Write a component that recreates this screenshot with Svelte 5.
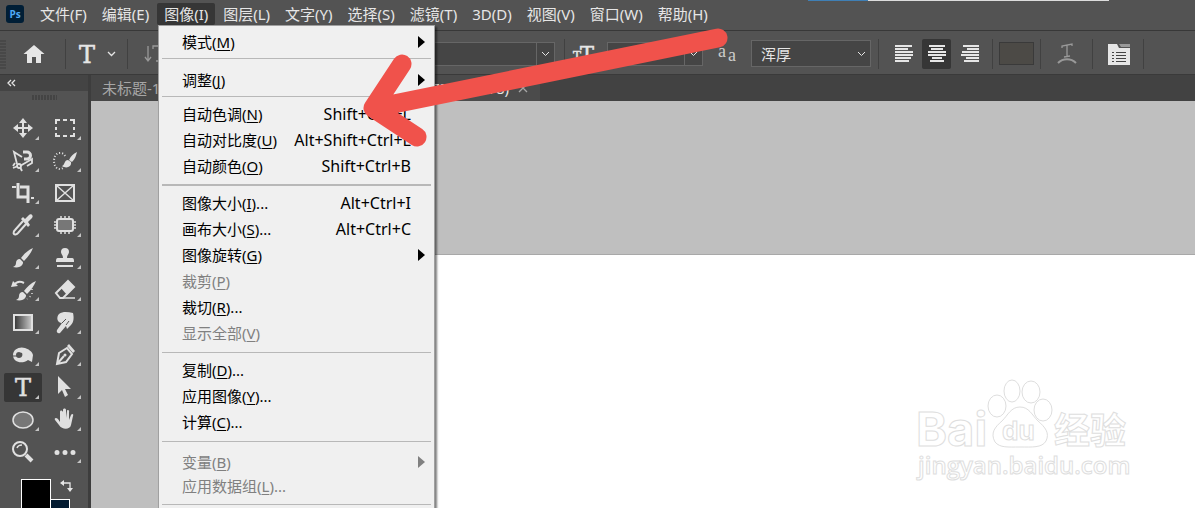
<script>
  const menus = [
    '文件(F)', '编辑(E)', '图像(I)', '图层(L)', '文字(Y)', '选择(S)',
    '滤镜(T)', '3D(D)', '视图(V)', '窗口(W)', '帮助(H)'
  ];
  let openMenu = $state('图像(I)');

  const groups = [
    { items: [{ label: '模式', key: 'M', sub: true }] },
    { kind: 'low', items: [{ label: '调整', key: 'J', sub: true }] },
    {
      kind: 'heavy',
      items: [
        { label: '自动色调', key: 'N', shortcut: 'Shift+Ctrl+L' },
        { label: '自动对比度', key: 'U', shortcut: 'Alt+Shift+Ctrl+L' },
        { label: '自动颜色', key: 'O', shortcut: 'Shift+Ctrl+B' }
      ]
    },
    {
      items: [
        { label: '图像大小', key: 'I', more: true, shortcut: 'Alt+Ctrl+I' },
        { label: '画布大小', key: 'S', more: true, shortcut: 'Alt+Ctrl+C' },
        { label: '图像旋转', key: 'G', sub: true },
        { label: '裁剪', key: 'P', disabled: true },
        { label: '裁切', key: 'R', more: true },
        { label: '显示全部', key: 'V', disabled: true }
      ]
    },
    {
      items: [
        { label: '复制', key: 'D', more: true },
        { label: '应用图像', key: 'Y', more: true },
        { label: '计算', key: 'C', more: true }
      ]
    },
    {
      kind: 'tight',
      items: [
        { label: '变量', key: 'B', disabled: true, sub: true },
        { label: '应用数据组', key: 'L', more: true, disabled: true }
      ]
    }
  ];

  const brush = '<path fill="currentColor" d="M22 2c-5 2-9 6-12 10l3 3c4-4 7-8 9-13zM9 13c-3 0-4 2-4 4s-1 3-3 4c4 1 8 0 9-2 1-1 1-2 1-3z"/>';

  // artwork is drawn on a 24px grid, light parts take the button colour
  const tools = [
    { name: '移动工具', art: '<path d="M12 4v16M4 12h16" stroke-width="2"/><path fill="currentColor" d="M12 2l4 5H8zM12 22l4-5H8zM2 12l5-4v8zM22 12l-5-4v8z"/>' },
    { name: '矩形选框工具', art: '<path stroke-width="2" d="M3 8V4h4M10 4h4M17 4h4v4M21 11v3M21 17v3h-4M14 20h-4M7 20H3v-3M3 14v-3"/>' },
    { name: '套索工具', art: '<path stroke-width="1.8" d="M11 8L3 3l3 12M9 17l12-7v4l-5 3M2 19l5-2M9 18l2 4M4 14l-2 3"/><circle cx="8" cy="17" r="2" stroke-width="1.8"/><path stroke-width="3" d="M12 3h4a3 3 0 0 1 0 7h-3"/>' },
    { name: '快速选择工具', art: '<path stroke-width="2" stroke-dasharray="1 2" d="M12 7a5 5 0 0 0-5-3C3 4 1 8 1 12s2 8 6 8c2 0 3-1 4-2"/><path fill="currentColor" d="M24 3c-4 2-6 4-8 8l3 2c3-3 4-6 5-10zM15 11c-4 0-3 5-6 6 4 3 10 1 9-4z"/>' },
    { name: '裁剪工具', art: '<path stroke-width="3" d="M7 2v14h10M9 6h8v16"/><path stroke-width="2" d="M1 6h4M20 17h3"/>' },
    { name: '图框工具', plain: true, art: '<path stroke-width="2" d="M3 4h18v16H3z"/><path stroke-width="1.5" d="M3 4l18 16M21 4L3 20"/><path fill="currentColor" d="M2 3h3v3H2zM19 3h3v3h-3zM2 18h3v3H2zM19 18h3v3h-3z"/>' },
    { name: '吸管工具', art: '<path stroke-width="2" d="M12 8L4 17c-1 1-2 3-1 4s3 0 4-1l8-9"/><path fill="currentColor" d="M10 6l2-2 2 2 4-4c2-2 5 1 3 3l-4 4 2 3-2 2z"/>' },
    { name: '修补工具', art: '<rect x="4" y="6" width="16" height="12" rx="2" stroke-width="2" fill="#777"/><path stroke-width="1.5" d="M8 3v4M12 3v4M16 3v4M8 17v4M12 17v4M16 17v4M1 9h4M1 12h4M1 15h4M19 9h4M19 12h4M19 15h4"/>' },
    { name: '画笔工具', art: brush },
    { name: '仿制图章工具', art: '<path fill="currentColor" d="M12 2a4 4 0 0 1 4 4c0 2-2 3-2 6h5c2 0 2 2 2 4H3c0-2 0-4 2-4h5c0-3-2-4-2-6a4 4 0 0 1 4-4z"/><path stroke-width="2" d="M4 20h16"/>' },
    { name: '历史记录画笔工具', art: `<g transform="translate(3 1)">${brush}</g><path stroke-width="2" d="M3 7c3-4 6-4 10-2"/><path fill="currentColor" d="M0 9l2-6 5 5z"/><path stroke-width="1.5" stroke-dasharray="1 3" d="M21 11v6l-5 4"/>` },
    { name: '橡皮擦工具', art: '<path stroke-width="2" d="M3 15L15 3l6 6L10 20H7z"/><path fill="currentColor" d="M8 10l7-7 6 6-7 8z"/><path stroke-width="1.5" d="M8 20h14"/>' },
    { name: '渐变工具', art: '<defs><linearGradient id="ramp"><stop offset="0" stop-color="#333"/><stop offset="1" stop-color="#ccc"/></linearGradient></defs><rect x="3" y="5" width="18" height="15" fill="url(#ramp)" stroke-width="2"/>' },
    { name: '涂抹工具', art: '<path fill="currentColor" d="M6 4c4-3 9-2 14-1 1 4 1 9-2 12l-4 4-1-3-6 7c-2 1-4-1-3-3l5-7c-5 0-6-6-3-9z"/><path stroke="#535353" stroke-width="1" d="M9 13l4-4M13 15l3-4"/>' },
    { name: '海绵工具', art: '<path fill="currentColor" fill-rule="evenodd" d="M2 12c0-6 7-9 12-7 3 1 7 3 8 7l-1 7-4-2c-5 4-15 3-15-5zM8 9a3 3 0 1 0 0 6c3 0 4-3 3-5"/><path stroke="#535353" stroke-width="1" d="M2 13h4"/>' },
    { name: '钢笔工具', art: '<path stroke-width="2" d="M4 21l2-11 8-5 5 6-6 8zM4 21l7-8"/><path fill="currentColor" d="M14 3l2-2 6 7-2 2z"/><circle cx="12" cy="12" r="1.5" fill="currentColor"/>' },
    { name: '横排文字工具', active: true, art: '<text x="12" y="21" class="glyph">T</text>' },
    { name: '路径选择工具', art: '<path fill="currentColor" d="M5 1v18l4-4 3 7 3-2-3-6h6z"/>' },
    { name: '椭圆工具', art: '<ellipse cx="12" cy="13" rx="10" ry="8" fill="#777" stroke-width="1.5"/>' },
    { name: '抓手工具', art: '<path fill="currentColor" d="M7 15V5c0-2 2-2 3 0v6-8c0-2 3-2 3 0v8l1-7c0-2 3-1 2 1v8l2-5c1-2 3-1 2 1l-2 9c-1 5-9 5-12 0l-4-5c-1-2 1-3 3-1z"/>' },
    { name: '缩放工具', plain: true, art: '<circle cx="9" cy="9" r="7" stroke-width="2"/><path stroke-width="4" d="M15 15l6 6"/><path stroke-width="1.5" d="M6 8c1-3 3-3 5-3"/>' },
    { name: '编辑工具栏', art: '<path fill="currentColor" d="M4 10a2 2 0 1 1 0 5 2 2 0 0 1 0-5zM12 10a2 2 0 1 1 0 5 2 2 0 0 1 0-5zM20 10a2 2 0 1 1 0 5 2 2 0 0 1 0-5z"/>' }
  ];
</script>

{#snippet picker(label, value, kind)}
  <label class="picker {kind}">
    <select aria-label={label}>
      <option>{value}</option>
    </select>
    <svg width="9" height="6" viewBox="0 0 9 6"><path d="M1 1l3.5 3.5L8 1" /></svg>
  </label>
{/snippet}

<div class="app">
  <nav class="menubar">
    <svg class="logo" width="18" height="18" viewBox="0 0 18 18">
      <rect width="18" height="18" rx="3" fill="#001e36" />
      <text x="9" y="13">Ps</text>
    </svg>
    {#each menus as menu}
      <button class:open={menu === openMenu} onclick={() => (openMenu = menu)}>{menu}</button>
    {/each}
    <div class="progress"><span></span></div>
  </nav>

  <div class="options">
    <span class="grip"></span>
    <button class="home" aria-label="主页">
      <svg width="22" height="20" viewBox="0 0 22 20">
        <path fill="currentColor" d="M11 1l10.500 9H18v9h-5v-6H9v6H4v-9H.5z" />
      </svg>
    </button>
    <i class="rule"></i>
    <button class="type" aria-label="文字工具预设">
      <svg width="20" height="24" viewBox="0 0 20 24"><text x="10" y="21" class="glyph">T</text></svg>
      <svg width="9" height="6" viewBox="0 0 9 6"><path class="thin" d="M1 1l3.500 3.500L8 1" /></svg>
    </button>
    <i class="rule"></i>
    <button class="orient" aria-label="切换文本取向">
      <svg width="22" height="20" viewBox="0 0 22 20">
        <path class="thin" d="M4 2v14M1 13l3 4 3-4M9 5V2h12v3M15 2v15M12 17h6" />
      </svg>
    </button>
    {@render picker('字体', '微软雅黑', 'family')}
    {@render picker('字体样式', 'Regular', 'style')}
    <i class="rule"></i>
    <svg class="size-icon" width="22" height="20" viewBox="0 0 22 20">
      <text x="4" y="17" class="glyph small">T</text>
      <text x="14" y="17" class="glyph mid">T</text>
    </svg>
    {@render picker('字体大小', '30 点', 'size')}
    <svg class="aa" width="20" height="22" viewBox="0 0 20 22">
      <text x="0" y="14">a</text>
      <text x="10" y="18">a</text>
    </svg>
    {@render picker('消除锯齿', '浑厚', 'smooth')}
    <i class="rule"></i>
    <div class="aligns">
      <button aria-label="左对齐文本">
        <svg width="20" height="20" viewBox="0 0 20 20">
          <path d="M1 2h17M1 5h13M1 8h18M1 11h18M1 14h16M1 17h14" />
        </svg>
      </button>
      <button class="on" aria-label="居中对齐文本">
        <svg width="20" height="20" viewBox="0 0 20 20">
          <path d="M2 2h16M4 5h12M1 8h18M1 11h18M5 14h10M3 17h14" />
        </svg>
      </button>
      <button aria-label="右对齐文本">
        <svg width="20" height="20" viewBox="0 0 20 20">
          <path d="M3 2h16M7 5h12M2 8h17M1 11h18M6 14h13M4 17h15" />
        </svg>
      </button>
    </div>
    <i class="rule"></i>
    <button class="swatch" aria-label="文本颜色"></button>
    <i class="rule"></i>
    <button class="warp" aria-label="创建文字变形">
      <svg width="20" height="22" viewBox="0 0 20 22">
        <path class="thin" d="M5 5V3l10-2v2M10 2v11M7 14l6-1" />
        <path d="M1 20c5-5 13-5 18 0" />
      </svg>
    </button>
    <i class="rule"></i>
    <button class="panels" aria-label="字符和段落面板">
      <svg width="22" height="22" viewBox="0 0 22 22">
        <path fill="currentColor" d="M0 1h9l2 4h11v17H0z" />
        <path fill="#999" d="M11 1h11v3h-9z" />
        <path d="M4 9.500h2M8 9.500h10M4 12.500h2M8 12.500h10M4 15.500h2M8 15.500h10M4 18.500h2M8 18.500h10" />
      </svg>
    </button>
    <i class="rule"></i>
  </div>

  <div class="workspace">
    <aside class="toolbox">
      <button class="collapse" aria-label="折叠工具栏">
        <svg width="10" height="8" viewBox="0 0 10 8"><path class="thin" d="M4 1L1 4l3 3M8 1L5 4l3 3" /></svg>
      </button>
      <span class="grip wide"></span>
      <div class="tools">
        {#each tools as tool}
          <button class:active={tool.active} class:plain={tool.plain} aria-label={tool.name}>
            <svg width="24" height="24" viewBox="0 0 24 24">{@html tool.art}</svg>
          </button>
        {/each}
      </div>
      <div class="colors">
        <button class="fore" aria-label="前景色"></button>
        <div class="side">
          <button class="swap" aria-label="切换前景色和背景色">
            <svg width="14" height="13" viewBox="0 0 14 13">
              <path class="thin" d="M3 4h7v6" />
              <path fill="currentColor" d="M0 4l4-3v6zM7 9h6l-3 4z" />
            </svg>
          </button>
          <button class="back" aria-label="背景色"></button>
        </div>
      </div>
    </aside>

    <main>
      <div class="tabs">
        <button class="tab">未标题-1 @ 100%</button>
        <button class="tab current">未标题-2 @ 66.7% (RGB/8)
          <svg width="10" height="10" viewBox="0 0 10 10"><path class="thin" d="M1 1l8 8M9 1L1 9" /></svg>
        </button>
      </div>
      <div class="canvas">
        <div class="paper"></div>
      </div>
    </main>
  </div>

  <div class="dropdown">
    {#each groups as group}
      <ul class={group.kind}>
        {#each group.items as item}
          <li>
            <button disabled={item.disabled}>
              <span>{item.label}(<u>{item.key}</u>){item.more ? '...' : ''}</span>
              {#if item.shortcut}<kbd>{item.shortcut}</kbd>{/if}
              {#if item.sub}
                <svg width="7" height="12" viewBox="0 0 7 12"><path fill="currentColor" d="M0 0l7 6-7 6z" /></svg>
              {/if}
            </button>
          </li>
        {/each}
      </ul>
    {/each}
  </div>

  <svg class="watermark" width="220" height="112" viewBox="0 0 220 112">
    <text x="1" y="70" class="bai">Bai</text>
    <ellipse cx="82" cy="30" rx="9" ry="11" />
    <ellipse cx="97" cy="15" rx="8" ry="11" />
    <ellipse cx="116" cy="16" rx="9" ry="11" />
    <ellipse cx="128" cy="34" rx="9" ry="11" />
    <path d="M105 31c9 0 12 8 18 14 7 6 12 12 8 20-4 7-14 6-26 6s-20 1-25-5c-5-9 0-15 7-21 6-6 9-14 18-14z" />
    <text x="87" y="64" class="du">du</text>
    <text x="139" y="68" class="exp">经验</text>
    <text x="3" y="98" class="site">jingyan.baidu.com</text>
  </svg>

  <svg class="pointer" width="380" height="130" viewBox="0 0 380 130">
    <path d="M368 14L24 84M52 40L23 84l44 29" />
  </svg>
</div>

<style>
  :global(body) {
    margin: 0;
    background: #535353;
  }

  .app {
    position: relative;
    display: flex;
    flex-direction: column;
    height: 100vh;
    overflow: hidden;
    color: #e6e6e6;
    font: 15px/20px 'Noto Sans', 'Noto Sans CJK SC', sans-serif;
  }

  button,
  select {
    border: 0;
    margin: 0;
    padding: 0;
    background: none;
    color: inherit;
    font: inherit;
  }

  svg {
    display: block;
    flex: none;
    overflow: visible;
    fill: none;
    stroke: none;
  }

  .menubar {
    position: relative;
    display: flex;
    align-items: center;
    gap: 1px;
    height: 28px;
    padding-bottom: 2px;
    background: #535353;
    border-bottom: 1px solid #383838;
  }

  .menubar button {
    padding: 0 7px;
    height: 22px;
    border-radius: 2px;
    white-space: nowrap;
  }

  .menubar button.open {
    background: #363636;
  }

  .logo {
    margin: 0 8px 0 6px;
  }

  .logo text {
    fill: #4fa9f5;
    font: bold 10px 'Open Sans', sans-serif;
    text-anchor: middle;
  }

  .progress {
    position: absolute;
    top: 0;
    right: 86px;
    width: 301px;
    height: 1px;
    background: #dcdcdc;
  }

  .progress span {
    display: block;
    width: 60px;
    height: 1px;
    background: #3f7fb5;
  }

  .options {
    display: flex;
    align-items: center;
    flex: none;
    box-sizing: border-box;
    height: 44px;
    padding-top: 2px;
    background: #535353;
    border-bottom: 1px solid #3a3a3a;
  }

  .options .rule {
    flex: none;
    width: 1px;
    height: 30px;
    background: #414141;
  }

  .options svg path {
    stroke: currentColor;
    stroke-width: 2;
  }

  .options .home path,
  .options .panels path {
    stroke-width: 0;
  }

  .options .panels path:last-child {
    stroke: #444;
    stroke-width: 1;
  }

  svg path.thin,
  .options svg path.thin {
    stroke: currentColor;
    stroke-width: 1.3;
  }

  .grip {
    flex: none;
    width: 6px;
    height: 30px;
    background: repeating-linear-gradient(#535353 0 1px, #484848 1px 3px);
  }

  .home {
    margin: 0 20px 0 17px;
  }

  .type {
    display: flex;
    align-items: center;
    gap: 10px;
    margin: 0 11px;
  }

  :global(.glyph) {
    fill: currentColor;
    stroke: currentColor;
    stroke-width: 0.5;
    font: 24px 'DejaVu Serif', serif;
    text-anchor: middle;
  }

  .glyph.small {
    font-size: 12px;
  }

  .glyph.mid {
    font-size: 21px;
  }

  .orient {
    margin: 0 14px 0 16px;
    color: #999;
  }

  .picker {
    display: grid;
    grid-template-columns: 1fr 18px;
    align-items: center;
    box-sizing: border-box;
    height: 24px;
    background: #454545;
    border: 1px solid #666;
  }

  .picker select {
    grid-area: 1 / 1 / 2 / 3;
    appearance: none;
    width: 100%;
    height: 100%;
    padding-left: 4px;
    outline: 0;
  }

  .picker svg {
    grid-area: 1 / 2;
    justify-self: center;
    pointer-events: none;
  }

  .options .picker svg path {
    stroke-width: 1;
  }

  .family {
    width: 160px;
    margin-right: 12px;
  }

  .style {
    width: 203px;
    margin-right: 9px;
  }

  .style select,
  .size select {
    background: linear-gradient(#666, #666) right 17px top / 1px 100% no-repeat;
  }

  .size-icon {
    margin: 0 12px 0 8px;
  }

  .size {
    width: 96px;
  }

  .aa {
    margin: 0 13px 0 15px;
    fill: #ccc;
    font: 18px 'Liberation Serif', serif;
  }

  .smooth {
    width: 120px;
    height: 27px;
    margin-right: 7px;
  }

  .smooth select {
    padding-left: 9px;
  }

  .aligns {
    display: flex;
    gap: 4px;
    margin: 0 8px 0 10px;
  }

  .aligns button {
    display: grid;
    place-items: center;
    width: 29px;
    height: 30px;
    border-radius: 2px;
  }

  .aligns button.on {
    background: #363636;
  }

  .swatch {
    width: 35px;
    height: 23px;
    margin: 0 6px;
    background: #4c4a46;
    border: 1px solid #3a3a3a;
  }

  .warp {
    margin: 0 15px 0 16px;
    color: #999;
  }

  .panels {
    margin: 0 13px 0 15px;
  }

  .workspace {
    display: flex;
    flex: 1;
    min-height: 0;
  }

  .toolbox {
    display: flex;
    flex-direction: column;
    flex: none;
    width: 88px;
    background: #535353;
    border-right: 3px solid #3d3d3d;
  }

  .collapse {
    flex: none;
    height: 16px;
    padding-left: 7px;
    background: #444;
  }

  .grip.wide {
    align-self: center;
    width: 26px;
    height: 5px;
    margin: 4px 0 12px;
    background: repeating-linear-gradient(90deg, #535353 0 1px, #444 1px 3px);
  }

  .tools {
    display: grid;
    grid-template-columns: 42px 42px;
    grid-auto-rows: 1fr;
    place-items: center;
    flex: none;
    height: 356px;
    padding: 0 2px;
  }

  .tools button {
    display: grid;
    place-items: center;
    position: relative;
    width: 38px;
    height: 29px;
    border-radius: 2px;
    color: #e0e0e0;
  }

  .tools button svg {
    stroke: currentColor;
    stroke-width: 0;
  }

  .tools button.active {
    background: #363636;
  }

  .tools button::after {
    content: '';
    position: absolute;
    right: 3px;
    bottom: 3px;
    border: 2px solid transparent;
    border-right-color: #c4c4c4;
    border-bottom-color: #c4c4c4;
  }

  .tools button.plain::after {
    display: none;
  }

  .colors {
    display: flex;
    flex: none;
    padding: 11px 0 0 21px;
  }

  .fore {
    box-sizing: border-box;
    width: 30px;
    height: 30px;
    background: #000;
    border: 1px solid #fff;
  }

  .side {
    display: flex;
    flex-direction: column;
    gap: 7px;
  }

  .swap {
    margin-left: 9px;
  }

  .back {
    width: 19px;
    height: 20px;
    background: #021a30;
    border: 1px solid #fff;
    border-left: 0;
  }

  main {
    display: flex;
    flex-direction: column;
    flex: 1;
    min-width: 0;
  }

  .tabs {
    display: flex;
    flex: none;
    height: 26px;
    background: #424242;
  }

  .tab {
    width: 160px;
    padding-left: 11px;
    overflow: hidden;
    background: #474747;
    color: #a6a6a6;
    text-align: left;
    white-space: nowrap;
  }

  .tab.current {
    display: flex;
    align-items: center;
    justify-content: flex-end;
    gap: 9px;
    width: 289px;
    padding: 0 12px 0 0;
    background: #4b4b4b;
    color: #e6e6e6;
  }

  .tab.current svg {
    color: #a6a6a6;
  }

  .canvas {
    display: flex;
    flex: 1;
    box-sizing: border-box;
    padding: 153px 0 0 130px;
    background: #bfbfbf;
  }

  .paper {
    flex: 1;
    background: #fff;
    border-top: 1px solid #a8a8a8;
  }

  .dropdown {
    position: absolute;
    top: 25px;
    left: 158px;
    box-sizing: border-box;
    width: 277px;
    height: 500px;
    padding: 0 3px;
    background: #f0f0f0;
    border: 1px solid #a0a0a0;
    box-shadow: 2px 2px 2px rgba(0, 0, 0, 0.5);
    color: #000;
  }

  .dropdown ul {
    margin: 0;
    padding: 4px 0 6px;
    border-bottom: 1px solid #b8b8b8;
    list-style: none;
  }

  .dropdown ul:first-child {
    padding: 3px 0;
  }

  .dropdown ul.low {
    padding: 8px 0 3px;
  }

  .dropdown ul.heavy {
    padding-bottom: 5px;
    border-bottom-width: 2px;
  }

  .dropdown ul.tight {
    padding: 8px 0 6px;
  }

  .dropdown li button {
    display: flex;
    align-items: center;
    justify-content: space-between;
    width: 100%;
    height: 26px;
    padding: 0 6px 0 20px;
    white-space: nowrap;
  }

  .dropdown .tight button {
    height: 24px;
  }

  .dropdown li button:disabled {
    color: #808080;
  }

  .dropdown u {
    text-underline-offset: 2px;
  }

  .dropdown kbd {
    margin-right: 14px;
    font: inherit;
    font-size: 16px;
  }

  .watermark {
    position: absolute;
    right: 60px;
    bottom: 20px;
    fill: #fff;
    stroke: #dedede;
    stroke-width: 1;
    pointer-events: none;
  }

  .bai {
    font: bold 47px Inter, sans-serif;
  }

  .du {
    font: bold 26px Inter, sans-serif;
  }

  .exp {
    font: bold 36px 'Noto Sans CJK SC', sans-serif;
  }

  .site {
    font: 600 24px 'Open Sans', sans-serif;
  }

  .pointer {
    position: absolute;
    top: 24px;
    left: 350px;
    pointer-events: none;
    stroke: #f0524b;
    stroke-width: 19;
    stroke-linecap: round;
    stroke-linejoin: round;
  }
</style>
